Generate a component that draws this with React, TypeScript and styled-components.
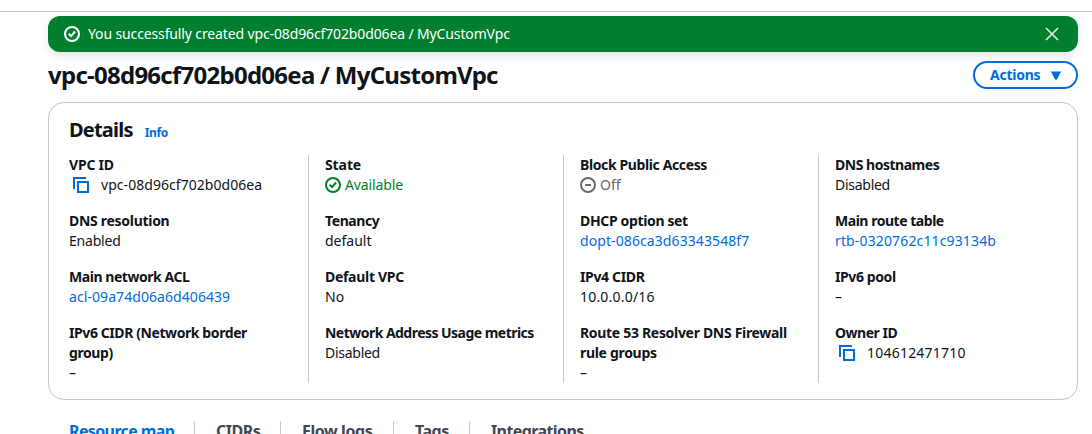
import React from 'react';
import styled, { createGlobalStyle } from 'styled-components';

const GlobalStyle = createGlobalStyle`
  * { box-sizing: border-box; }
  body { margin: 0; background: #fff; color: #0f141a; overflow: hidden;
    font: 14px/20px "Noto Sans", "Open Sans", sans-serif; }
`;

const Page = styled.div`
  height: 434px;
  overflow: hidden;
  padding-top: 11px;
`;
const Main = styled.main`
  border-top: 1px solid #c6c6cd;
  padding: 4px 14px 0 48px;
`;
const Banner = styled.div`
  display: flex;
  align-items: center;
  height: 36px;
  padding: 0 18px 0 16px;
  border-radius: 12px;
  background: #00802f;
  color: #fff;
  box-shadow: 0 4px 8px rgba(0, 7, 22, 0.1);
`;
const Text = styled.span<{ $track?: number }>`
  letter-spacing: ${(p) => p.$track ?? 0}px;
  white-space: nowrap;
`;
const Message = styled(Text)`
  margin: 0 auto 0 8px;
`;
const Header = styled.header`
  display: flex;
  justify-content: space-between;
  align-items: center;
  height: 50px;
  padding-bottom: 4px;
`;
const Title = styled.h1`
  margin: 0;
  font-size: 24px;
  line-height: 30px;
  font-weight: 700;
  letter-spacing: -0.74px;
  white-space: nowrap;
`;
const ActionsButton = styled.button`
  display: flex;
  align-items: center;
  justify-content: space-between;
  width: 105px;
  height: 28px;
  padding: 0 15px 0 15px;
  border: 2px solid #006ce0;
  border-radius: 14px;
  background: #fff;
  color: #006ce0;
  font: 700 14px/20px "Noto Sans", sans-serif;
  letter-spacing: -0.25px;
`;
const Card = styled.section`
  height: 298px;
  border: 1px solid #c6c6cd;
  border-radius: 16px;
  padding: 15px 20px 0;
`;
const CardHeader = styled.div`
  display: flex;
  align-items: baseline;
  gap: 12px;
  height: 37px;
`;
const CardTitle = styled.h2`
  margin: 0;
  font-size: 20px;
  line-height: 24px;
  letter-spacing: -0.8px;
`;
const Info = styled.a`
  color: #006ce0;
  font-size: 12px;
  line-height: 16px;
  font-weight: 700;
  letter-spacing: -0.35px;
`;
const Columns = styled.div`
  display: grid;
  grid-template-columns: 239px 255px 255px 1fr;
`;
const Column = styled.div`
  display: flex;
  flex-direction: column;
  gap: 16px;
  height: 228px;
  & + & {
    border-left: 1px solid #c6c6cd;
    padding-left: 16px;
  }
`;
const Label = styled.div<{ $track?: number }>`
  font-weight: 700;
  white-space: pre-line;
  letter-spacing: ${(p) => p.$track ?? 0}px;
`;
const tones = { plain: '#0f141a', link: '#006ce0', success: '#00802f', muted: '#656871' };
const Value = styled.div<{ $tone: keyof typeof tones }>`
  display: flex;
  align-items: center;
  height: 20px;
  color: ${(p) => tones[p.$tone]};
`;
const Slot = styled.span<{ $kind: 'copy' | 'status' }>`
  display: flex;
  padding: ${(p) => (p.$kind === 'copy' ? '0 12px 0 4px' : '0 4px 0 0')};
`;
const Tabs = styled.nav`
  display: flex;
  padding: 21px 0 0 21px;
`;
const Tab = styled.div<{ $active?: boolean; $width: number; $track: number }>`
  width: ${(p) => p.$width}px;
  height: 22px;
  color: ${(p) => (p.$active ? '#006ce0' : '#424650')};
  font-size: 16px;
  font-weight: 700;
  line-height: 20px;
  letter-spacing: ${(p) => p.$track}px;
  white-space: nowrap;
  & + & {
    border-left: 1px solid #c6c6cd;
    padding-left: 21px;
  }
`;

const Icon = ({ children }: { children: React.ReactNode }) => (
  <svg width="16" height="16" viewBox="0 0 16 16" fill="none" stroke="currentColor" strokeWidth="2">
    {children}
  </svg>
);
const icons = {
  check: <Icon><circle cx="8" cy="8" r="7" /><path d="m4.7 7.8 2.4 2.3 3.9-4.6" /></Icon>,
  off: <Icon><circle cx="8" cy="8" r="7" /><path d="M5.2 8h5.8" /></Icon>,
  copy: <Icon><g stroke="#006ce0"><path d="M5 5h10v10H5z" /><path d="M1 12V1h12" /></g></Icon>,
  close: <Icon><path d="m2 2 12 12M14 2 2 14" stroke="#e4e9e6" strokeWidth="1.7" /></Icon>,
};

type Item = {
  label: string; value: string; tone?: keyof typeof tones;
  icon?: 'check' | 'off' | 'copy'; lt?: number; vt?: number;
};
const columns: Item[][] = [
  [
    { label: 'VPC ID', value: 'vpc-08d96cf702b0d06ea', icon: 'copy', lt: -0.2, vt: 0.05 },
    { label: 'DNS resolution', value: 'Enabled', lt: -0.29, vt: -0.2 },
    { label: 'Main network ACL', value: 'acl-09a74d06a6d406439', tone: 'link', lt: -0.45, vt: 0.07 },
    { label: 'IPv6 CIDR (Network border\ngroup)', value: '–', lt: -0.41 },
  ],
  [
    { label: 'State', value: 'Available', tone: 'success', icon: 'check', lt: -0.1, vt: -0.12 },
    { label: 'Tenancy', value: 'default', lt: -0.4 },
    { label: 'Default VPC', value: 'No', lt: -0.3 },
    { label: 'Network Address Usage metrics', value: 'Disabled', lt: -0.53, vt: -0.27 },
  ],
  [
    { label: 'Block Public Access', value: 'Off', tone: 'muted', icon: 'off', lt: -0.38 },
    { label: 'DHCP option set', value: 'dopt-086ca3d63343548f7', tone: 'link', lt: -0.35, vt: 0.09 },
    { label: 'IPv4 CIDR', value: '10.0.0.0/16', lt: -0.35, vt: 0.2 },
    { label: 'Route 53 Resolver DNS Firewall\nrule groups', value: '–', lt: -0.31 },
  ],
  [
    { label: 'DNS hostnames', value: 'Disabled', lt: -0.48, vt: -0.27 },
    { label: 'Main route table', value: 'rtb-0320762c11c93134b', tone: 'link', lt: -0.47, vt: 0.14 },
    { label: 'IPv6 pool', value: '–', lt: -0.4 },
    { label: 'Owner ID', value: '104612471710', icon: 'copy', lt: -0.48, vt: 0.22 },
  ],
];

export default function App() {
  return (
    <Page>
      <GlobalStyle />
      <Main>
        <Banner>
          {icons.check}
          <Message $track={-0.13}>You successfully created vpc-08d96cf702b0d06ea / MyCustomVpc</Message>
          {icons.close}
        </Banner>
        <Header>
          <Title>vpc-08d96cf702b0d06ea / MyCustomVpc</Title>
          <ActionsButton>
            Actions
            <svg width="10" height="9" viewBox="0 0 10 9"><path d="M0 .5h10L6 8.5H4z" fill="#006ce0" /></svg>
          </ActionsButton>
        </Header>
        <Card>
          <CardHeader><CardTitle>Details</CardTitle><Info>Info</Info></CardHeader>
          <Columns>
            {columns.map((items, i) => (
              <Column key={i}>
                {items.map((it) => (
                  <div key={it.label}>
                    <Label $track={it.lt}>{it.label}</Label>
                    <Value $tone={it.tone ?? 'plain'}>
                      {it.icon && <Slot $kind={it.icon === 'copy' ? 'copy' : 'status'}>{icons[it.icon]}</Slot>}
                      <Text $track={it.vt}>{it.value}</Text>
                    </Value>
                  </div>
                ))}
              </Column>
            ))}
          </Columns>
        </Card>
        <Tabs>
          <Tab $active $width={125} $track={-0.62}>Resource map</Tab>
          <Tab $width={86} $track={-0.5}>CIDRs</Tab>
          <Tab $width={113} $track={-0.4}>Flow logs</Tab>
          <Tab $width={76} $track={-0.5}>Tags</Tab>
          <Tab $width={140} $track={-0.6}>Integrations</Tab>
        </Tabs>
      </Main>
    </Page>
  );
}
